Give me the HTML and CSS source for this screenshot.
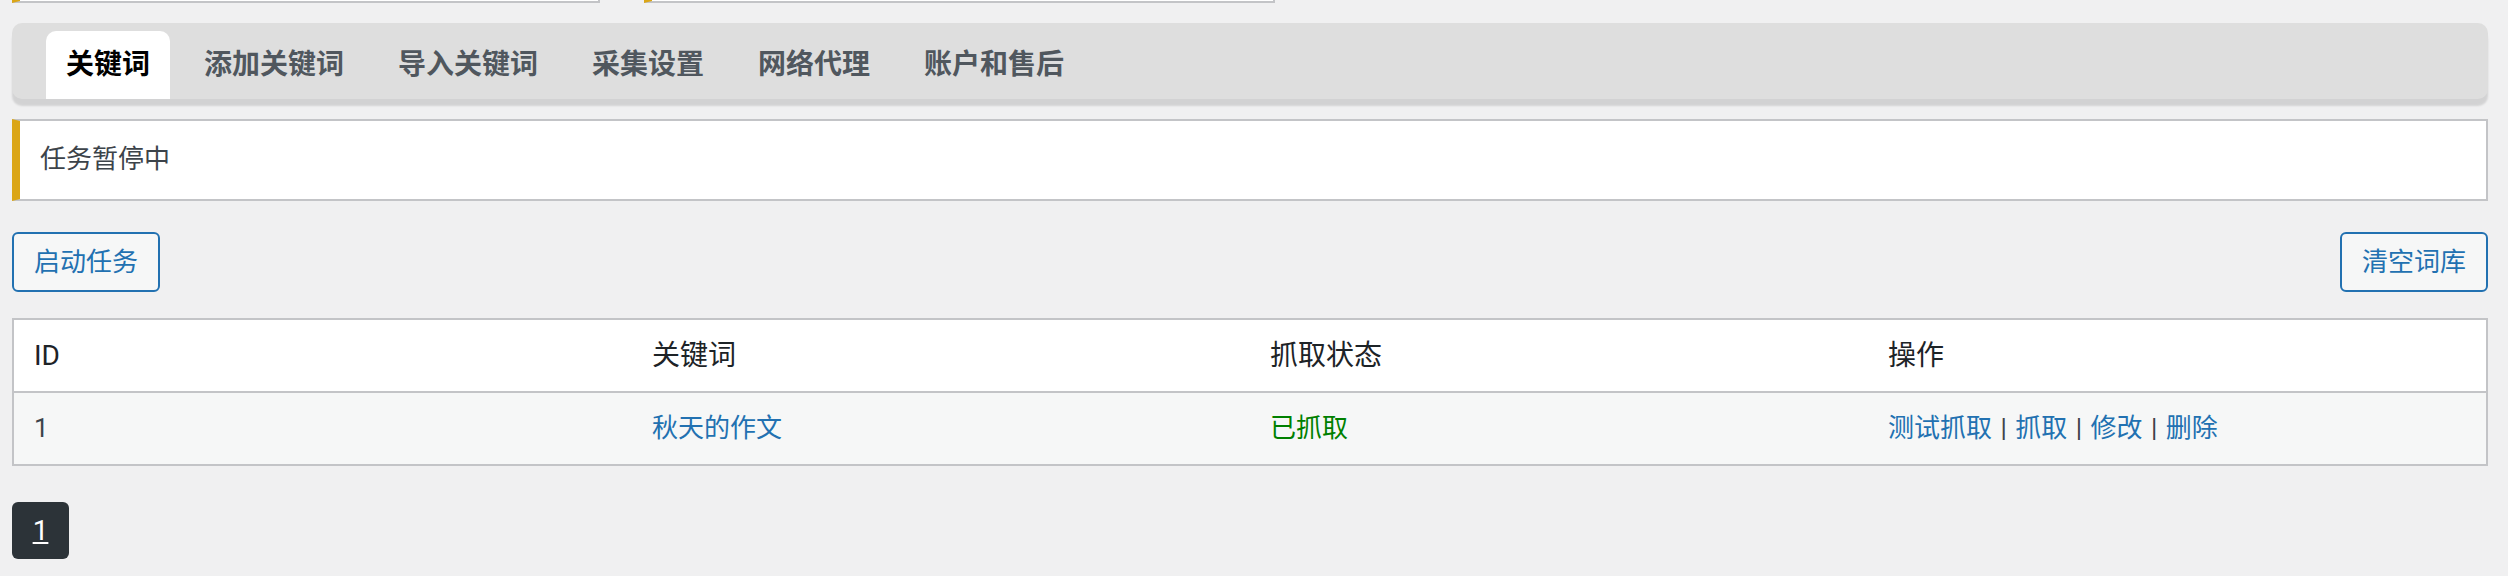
FILE: index.html
```html
<!DOCTYPE html>
<html lang="zh-CN">
<head>
    <meta charset="UTF-8">
    <meta name="viewport" content="width=device-width, initial-scale=1.0">
    <title>关键词</title>
    <link rel="stylesheet" href="styles.css">
</head>
<body>
    <div class="wrap">
        <!-- notices above, scrolled out of view -->
        <div class="top-notices">
            <div class="stub stub-a"></div>
            <div class="stub stub-b"></div>
        </div>

        <nav class="tab-bar">
            <a class="nav-tab active" href="#">关键词</a>
            <a class="nav-tab" href="#">添加关键词</a>
            <a class="nav-tab" href="#">导入关键词</a>
            <a class="nav-tab" href="#">采集设置</a>
            <a class="nav-tab" href="#">网络代理</a>
            <a class="nav-tab" href="#">账户和售后</a>
        </nav>

        <div class="notice">
            <p>任务暂停中</p>
        </div>

        <div class="actions">
            <button class="button">启动任务</button>
            <button class="button">清空词库</button>
        </div>

        <table class="keyword-table">
            <thead>
                <tr>
                    <th>ID</th>
                    <th>关键词</th>
                    <th>抓取状态</th>
                    <th>操作</th>
                </tr>
            </thead>
            <tbody>
                <tr>
                    <td>1</td>
                    <td><a href="#">秋天的作文</a></td>
                    <td class="done">已抓取</td>
                    <td class="ops">
                        <a href="#">测试抓取</a> | <a href="#">抓取</a> | <a href="#">修改</a> | <a href="#">删除</a>
                    </td>
                </tr>
            </tbody>
        </table>

        <div class="pagination">
            <a class="page current" href="#">1</a>
        </div>
    </div>
</body>
</html>
```

FILE: styles.css
```css
body {
    margin: 0;
    padding: 0;
    background: #f0f0f1;
    color: #3c434a;
    font-family: Roboto, "Noto Sans CJK SC", sans-serif;
}

.wrap {
    padding: 0 20px 0 12px;
}

.top-notices {
    height: 3px;
    overflow: hidden;
    display: flex;
    align-items: flex-end;
    gap: 44px;
}

.stub {
    height: 30px;
    background: #fff;
    border: 2px solid #c3c4c7;
    border-left: 8px solid #dba617;
    border-top: none;
    box-sizing: border-box;
}

.stub-a {
    width: 588px;
}

.stub-b {
    width: 631px;
}

.tab-bar {
    margin-top: 20px;
    display: flex;
    padding: 8px 0 0 20px;
    background: #dedede;
    border-radius: 10px;
    box-shadow: 0 7px 2px rgba(0, 0, 0, 0.12);
}

.nav-tab {
    margin-left: 14px;
    padding: 10px 20px;
    font-size: 28px;
    line-height: 48px;
    font-weight: 600;
    color: #50575e;
    text-decoration: none;
    border-radius: 10px 10px 0 0;
}

.nav-tab.active {
    background: #fff;
    color: #000;
}

.notice {
    margin-top: 20px;
    background: #fff;
    border: 2px solid #c3c4c7;
    border-left: 8px solid #dba617;
    padding: 0 20px;
}

.notice p {
    margin: 0;
    padding: 19px 0 20px;
    font-size: 26px;
    line-height: 39px;
    color: #3c434a;
}

.actions {
    margin-top: 31px;
    display: flex;
    justify-content: space-between;
}

.button {
    height: 60px;
    padding: 0 20px;
    border: 2px solid #2271b1;
    border-radius: 6px;
    background: #f6f7f7;
    color: #2271b1;
    font-family: inherit;
    font-size: 26px;
    line-height: 56px;
}

.keyword-table {
    margin-top: 26px;
    width: 100%;
    table-layout: fixed;
    border-collapse: separate;
    border-spacing: 0;
    border: 2px solid #c3c4c7;
    background: #fff;
}

.keyword-table th {
    text-align: left;
    font-weight: 400;
    font-size: 28px;
    line-height: 39px;
    color: #1d2327;
    padding: 16px 20px;
    border-bottom: 2px solid #c3c4c7;
}

.keyword-table td {
    background: #f6f7f7;
    font-size: 26px;
    line-height: 39px;
    color: #3c434a;
    padding: 16px 20px;
}

.keyword-table a {
    color: #2271b1;
    text-decoration: none;
}

.keyword-table td.done {
    color: #008000;
}

.ops {
    word-spacing: 2px;
}

.pagination {
    margin-top: 36px;
    display: flex;
}

.page {
    width: 57px;
    height: 57px;
    display: flex;
    align-items: center;
    justify-content: center;
    border-radius: 6px;
    font-size: 28px;
    color: #fff;
}

.page.current {
    background: #2c3338;
    text-decoration: underline;
}
```
